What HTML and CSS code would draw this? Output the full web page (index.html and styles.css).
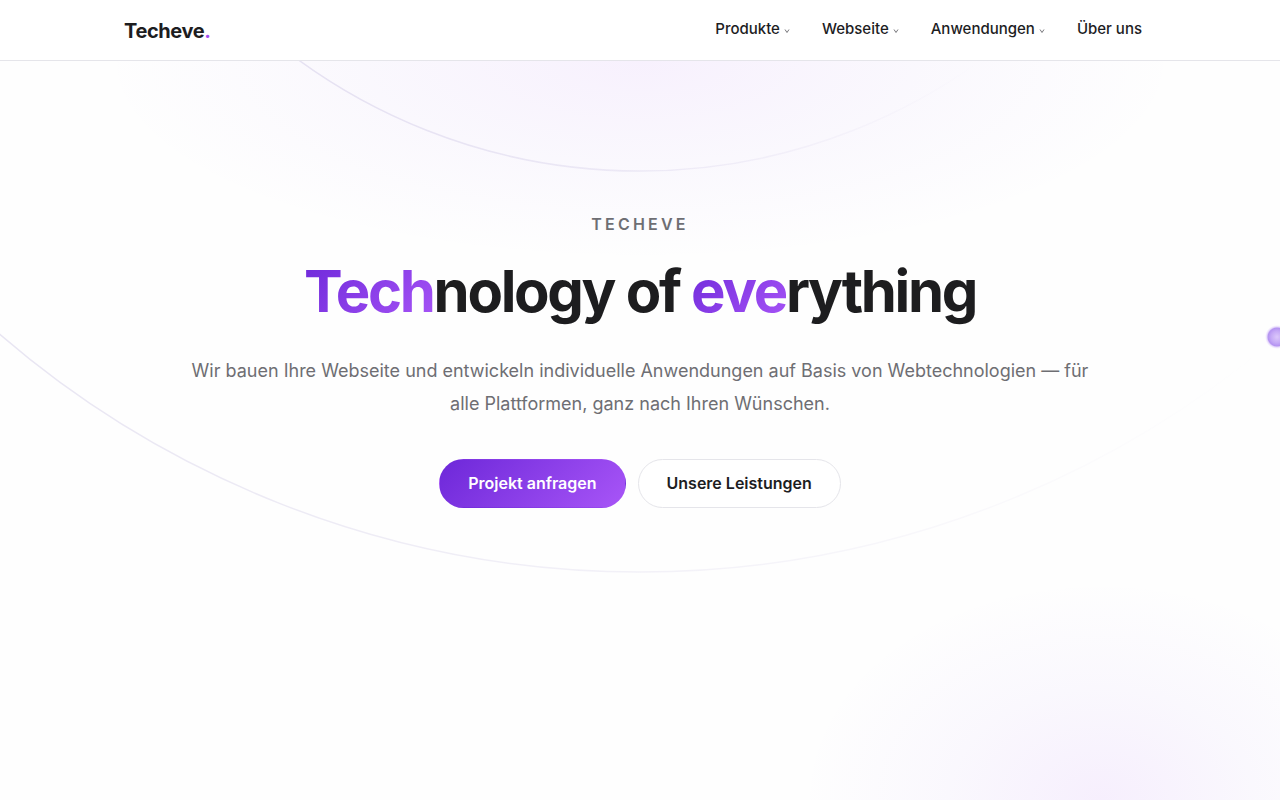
FILE: index.html
```html
<!DOCTYPE html>
<html lang="de">
    <head>
        <meta charset="utf-8">
        <meta name="viewport" content="width=device-width, initial-scale=1">
        <title>Techeve</title>
        <link rel="stylesheet" href="styles.css">
    </head>
    <body>

        <header class="header">
            <div class="header-inner">
                <a href="#" class="logo">Techeve<span class="logo-dot">.</span></a>

                <nav class="nav">
                    <a href="#" class="nav-link">Produkte
                        <svg class="chevron" viewBox="0 0 6 6"><path d="M1 1.5 L3 4.5 L5 1.5"/></svg>
                    </a>
                    <a href="#" class="nav-link">Webseite
                        <svg class="chevron" viewBox="0 0 6 6"><path d="M1 1.5 L3 4.5 L5 1.5"/></svg>
                    </a>
                    <a href="#" class="nav-link">Anwendungen
                        <svg class="chevron" viewBox="0 0 6 6"><path d="M1 1.5 L3 4.5 L5 1.5"/></svg>
                    </a>
                    <a href="#" class="nav-link">Über uns</a>
                </nav>
            </div>
        </header>

        <main class="hero">
            <!-- orbit rings behind the text -->
            <svg class="orbits" viewBox="0 0 1280 739" preserveAspectRatio="xMidYMin slice" aria-hidden="true">
                <defs>
                    <linearGradient id="ring" gradientUnits="userSpaceOnUse" x1="0" y1="0" x2="1280" y2="0">
                        <stop offset="0" stop-color="#6d5bb0" stop-opacity="0.15"/>
                        <stop offset="0.5" stop-color="#6d5bb0" stop-opacity="0.08"/>
                        <stop offset="0.9" stop-color="#6d5bb0" stop-opacity="0.01"/>
                        <stop offset="1" stop-color="#6d5bb0" stop-opacity="0"/>
                    </linearGradient>
                    <linearGradient id="ring-inner" gradientUnits="userSpaceOnUse" x1="300" y1="0" x2="980" y2="0">
                        <stop offset="0" stop-color="#6d5bb0" stop-opacity="0.15"/>
                        <stop offset="0.5" stop-color="#6d5bb0" stop-opacity="0.1"/>
                        <stop offset="1" stop-color="#6d5bb0" stop-opacity="0"/>
                    </linearGradient>
                    <radialGradient id="planet">
                        <stop offset="0" stop-color="#dcc8fb"/>
                        <stop offset="0.5" stop-color="#c5a9f6"/>
                        <stop offset="0.75" stop-color="#b493f1"/>
                        <stop offset="0.85" stop-color="#d9c5fa" stop-opacity="0.6"/>
                        <stop offset="1" stop-color="#e9d5ff" stop-opacity="0"/>
                    </radialGradient>
                </defs>
                <circle class="ring ring-small" cx="640" cy="-470" r="580"/>
                <circle class="ring" cx="640" cy="-470" r="981"/>
                <circle cx="1277" cy="276" r="12" fill="url(#planet)"/>
            </svg>

            <div class="hero-content">
                <p class="eyebrow">TECHEVE</p>
                <h1 class="title"><span class="accent">Tech</span>nology of <span class="accent">eve</span>rything</h1>
                <p class="lead">Wir bauen Ihre Webseite und entwickeln individuelle Anwendungen auf Basis von Webtechnologien — für alle Plattformen, ganz nach Ihren Wünschen.</p>

                <div class="actions">
                    <a href="#" class="btn btn-primary">Projekt anfragen</a>
                    <a href="#" class="btn btn-outline">Unsere Leistungen</a>
                </div>
            </div>
        </main>

    </body>
</html>
```

FILE: styles.css
```css
*{
    margin: 0;
    padding: 0;
    box-sizing: border-box;
}

body{
    min-height: 100vh;
    display: flex;
    flex-direction: column;
    font-family: Inter, "Liberation Sans", sans-serif;
    color: #1d1d1f;
    background: #fefefe;
    -webkit-font-smoothing: antialiased;
}

a{
    color: inherit;
    text-decoration: none;
}

.header{
    background: #fff;
    border-bottom: 1px solid #e5e5ea;
}

.header-inner{
    max-width: 1080px;
    height: 60px;
    margin: 0 auto;
    padding: 2px 24px 0;
    display: flex;
    align-items: center;
    justify-content: space-between;
}

.logo{
    font-size: 20px;
    line-height: 24px;
    font-weight: 700;
    letter-spacing: -0.02em;
}

.logo-dot{
    color: #a34ff0;
}

.nav{
    display: flex;
    gap: 4px;
    padding-bottom: 4px;
}

.nav-link{
    display: flex;
    align-items: center;
    gap: 4px;
    padding: 8px 14px;
    font-size: 15px;
    line-height: 20px;
    font-weight: 500;
}

.chevron{
    width: 6px;
    height: 6px;
    margin-top: 4px;
    fill: none;
    stroke: #77777c;
    stroke-width: 1;
}

.hero{
    position: relative;
    flex: 1;
    overflow: hidden;
    background:
        radial-gradient(ellipse 540px 200px at 50% 0, rgba(168, 85, 247, 0.08), rgba(124, 58, 237, 0.03) 50%, transparent),
        radial-gradient(ellipse 300px 220px at 86% 100%, rgba(168, 85, 247, 0.09), rgba(124, 58, 237, 0.03) 50%, transparent);
}

.orbits{
    position: absolute;
    top: 0;
    left: 0;
    width: 100%;
    height: 100%;
}

.ring{
    fill: none;
    stroke: url(#ring);
    stroke-width: 1.5;
}

.ring-small{
    stroke: url(#ring-inner);
}

.hero-content{
    position: relative;
    max-width: 960px;
    margin: 0 auto;
    padding: 151px 24px 80px;
    text-align: center;
}

.eyebrow{
    font-size: 16px;
    line-height: 24px;
    font-weight: 600;
    letter-spacing: 0.2em;
    color: #6e6e73;
}

.title{
    margin-top: 22px;
    font-size: 58px;
    line-height: 66px;
    font-weight: 700;
    letter-spacing: -0.04em;
}

.accent{
    background: linear-gradient(135deg, #6d28d9, #a855f7);
    -webkit-background-clip: text;
    background-clip: text;
    color: transparent;
}

.lead{
    margin-top: 30px;
    font-size: 18px;
    line-height: 33px;
    color: #6e6e73;
}

.actions{
    display: flex;
    flex-wrap: wrap;
    justify-content: center;
    gap: 12px;
    margin-top: 39px;
}

.btn{
    padding: 12px 28px;
    border: 1px solid transparent;
    border-radius: 25px;
    font-size: 16px;
    line-height: 23px;
    font-weight: 600;
}

.btn-primary{
    color: #fff;
    background: linear-gradient(135deg, #6d28d9, #a855f7);
}

.btn-outline{
    background: #fff;
    border-color: #e5e5ea;
}
```
